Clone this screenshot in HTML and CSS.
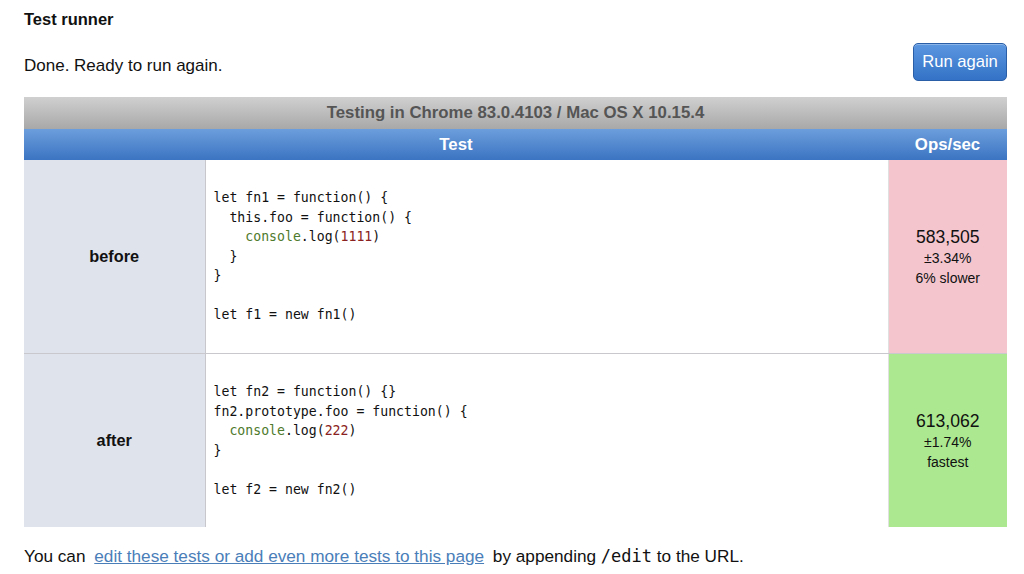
FILE: index.html
```html
<!DOCTYPE html>
<html>
<head>
<meta charset="utf-8">
<link rel="stylesheet" href="styles.css">
</head>
<body>
<div class="page">
  <h1 class="title">Test runner</h1>
  <div class="status-bar">
    <p class="status">Done. Ready to run again.</p>
    <button class="run-btn">Run again</button>
  </div>
  <table class="results">
    <colgroup>
      <col class="col-label">
      <col class="col-code">
      <col class="col-ops">
    </colgroup>
    <thead>
      <tr class="ua-row"><th colspan="3">Testing in Chrome 83.0.4103 / Mac OS X 10.15.4</th></tr>
      <tr class="head-row"><th colspan="2">Test</th><th>Ops/sec</th></tr>
    </thead>
    <tbody>
      <tr class="row-before">
        <th class="label">before</th>
        <td class="code">
          <div class="src">
            <div class="ln">let fn1 = function() {</div>
            <div class="ln i1">this.foo = function() {</div>
            <div class="ln i2"><span class="obj">console</span><span>.log(</span><span class="num">1111</span><span>)</span></div>
            <div class="ln i1">}</div>
            <div class="ln">}</div>
            <div class="ln">&nbsp;</div>
            <div class="ln">let f1 = new fn1()</div>
          </div>
        </td>
        <td class="ops slow"><div class="ops-num">583,505</div><div class="ops-sub">±3.34%</div><div class="ops-sub">6% slower</div></td>
      </tr>
      <tr class="row-after">
        <th class="label">after</th>
        <td class="code">
          <div class="src">
            <div class="ln">let fn2 = function() {}</div>
            <div class="ln">fn2.prototype.foo = function() {</div>
            <div class="ln i1"><span class="obj">console</span><span>.log(</span><span class="num">222</span><span>)</span></div>
            <div class="ln">}</div>
            <div class="ln">&nbsp;</div>
            <div class="ln">let f2 = new fn2()</div>
          </div>
        </td>
        <td class="ops fast"><div class="ops-num">613,062</div><div class="ops-sub">±1.74%</div><div class="ops-sub">fastest</div></td>
      </tr>
    </tbody>
  </table>
  <p class="footer">You can <a href="#">edit these tests or add even more tests to this page</a> by appending <code>/edit</code> to the URL.</p>
</div>
</body>
</html>
```
FILE: styles.css
```css
html, body {
  margin: 0;
  padding: 0;
  background: #fff;
}
body {
  font-family: "Liberation Sans", Arial, sans-serif;
  color: #111;
}
.page {
  padding: 10px 17px 0 24px;
}
.title {
  font-size: 16.5px;
  font-weight: bold;
  margin: 0;
  line-height: 18px;
}
.status-bar {
  display: flex;
  justify-content: space-between;
  align-items: center;
  margin-top: 15px;
  height: 38px;
}
.status {
  margin: 0;
  font-size: 17px;
  line-height: 20px;
  padding-top: 8px;
}
.run-btn {
  font-family: "Liberation Sans", Arial, sans-serif;
  font-size: 16.6px;
  color: #fff;
  width: 94px;
  height: 38px;
  border: 1px solid #2a5fa8;
  border-radius: 5px;
  background: linear-gradient(#5b96e0, #3372c6);
  box-shadow: inset 0 1px 0 rgba(255,255,255,0.3);
  padding: 0;
}
.results {
  margin-top: 16px;
  width: 983px;
  border-collapse: collapse;
  table-layout: fixed;
}
.col-label { width: 181px; }
.col-code { width: 683px; }
.col-ops { width: 119px; }
.ua-row th {
  height: 32px;
  padding: 0;
  background: linear-gradient(#d0d0d1, #a8a8a8);
  color: #555;
  font-size: 16.8px;
  font-weight: bold;
}
.head-row th {
  height: 31px;
  padding: 0;
  background: linear-gradient(#6c9edc, #3b74c2);
  color: #fff;
  font-size: 16.8px;
  font-weight: bold;
}
.label {
  background: #dfe3ec;
  font-size: 16.3px;
  font-weight: bold;
  border-right: 1px solid #c8c8cc;
  padding: 0;
}
.row-before td, .row-before th {
  height: 193px;
  border-bottom: 1px solid #c9c9cd;
}
.row-after td, .row-after th {
  height: 173px;
}
.code {
  padding: 0 8px;
  vertical-align: middle;
}
.src {
  font-family: "DejaVu Sans Mono", monospace;
  font-size: 13.2px;
  line-height: 19.5px;
  color: #111;
}
.ln {
  white-space: pre;
}
.i1 { padding-left: 2ch; }
.i2 { padding-left: 4ch; }
.obj { color: #4e7a2c; }
.num { color: #8a2222; }
.ops {
  text-align: center;
  padding: 0;
  border-left: 1px solid #e0e0e0;
}
.slow { background: #f4c5cd; }
.fast { background: #abe88f; }
.ops-num {
  font-size: 17.6px;
  line-height: 22px;
}
.ops-sub {
  font-size: 14px;
  line-height: 20px;
}
.footer {
  margin: 19px 0 0;
  font-size: 17.2px;
  line-height: 20px;
}
.footer a {
  color: #4a7eb9;
  margin: 0 4px;
}
.footer code {
  font-family: "DejaVu Sans Mono", monospace;
  font-size: 17px;
}
```
